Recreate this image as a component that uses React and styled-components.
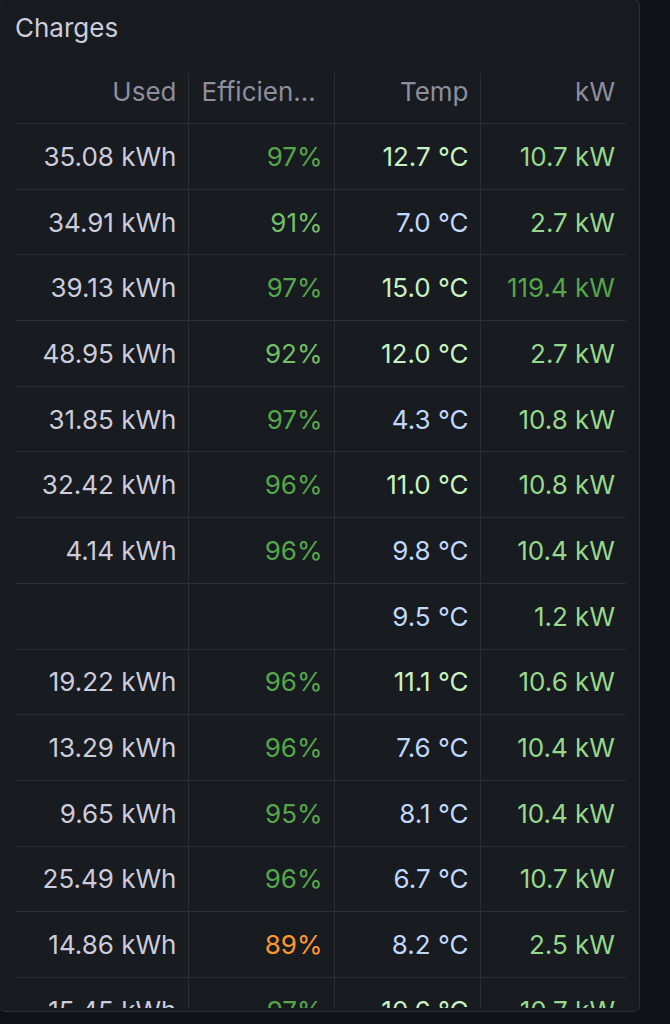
import styled, { createGlobalStyle } from 'styled-components';

const rows = [
  { used: '35.08 kWh', eff: '97%', effTone: 'dark', temp: '12.7 °C', tempTone: 'green', kw: '10.7 kW', kwTone: 'light' },
  { used: '34.91 kWh', eff: '91%', effTone: 'mid', temp: '7.0 °C', tempTone: 'blue', kw: '2.7 kW', kwTone: 'light' },
  { used: '39.13 kWh', eff: '97%', effTone: 'dark', temp: '15.0 °C', tempTone: 'green', kw: '119.4 kW', kwTone: 'dark' },
  { used: '48.95 kWh', eff: '92%', effTone: 'mid', temp: '12.0 °C', tempTone: 'green', kw: '2.7 kW', kwTone: 'light' },
  { used: '31.85 kWh', eff: '97%', effTone: 'dark', temp: '4.3 °C', tempTone: 'blue', kw: '10.8 kW', kwTone: 'light' },
  { used: '32.42 kWh', eff: '96%', effTone: 'dark', temp: '11.0 °C', tempTone: 'green', kw: '10.8 kW', kwTone: 'light' },
  { used: '4.14 kWh', eff: '96%', effTone: 'dark', temp: '9.8 °C', tempTone: 'blue', kw: '10.4 kW', kwTone: 'light' },
  { used: '', eff: '', effTone: 'dark', temp: '9.5 °C', tempTone: 'blue', kw: '1.2 kW', kwTone: 'light' },
  { used: '19.22 kWh', eff: '96%', effTone: 'dark', temp: '11.1 °C', tempTone: 'green', kw: '10.6 kW', kwTone: 'light' },
  { used: '13.29 kWh', eff: '96%', effTone: 'dark', temp: '7.6 °C', tempTone: 'blue', kw: '10.4 kW', kwTone: 'light' },
  { used: '9.65 kWh', eff: '95%', effTone: 'dark', temp: '8.1 °C', tempTone: 'blue', kw: '10.4 kW', kwTone: 'light' },
  { used: '25.49 kWh', eff: '96%', effTone: 'dark', temp: '6.7 °C', tempTone: 'blue', kw: '10.7 kW', kwTone: 'light' },
  { used: '14.86 kWh', eff: '89%', effTone: 'orange', temp: '8.2 °C', tempTone: 'blue', kw: '2.5 kW', kwTone: 'light' },
  { used: '15.45 kWh', eff: '97%', effTone: 'dark', temp: '10.6 °C', tempTone: 'green', kw: '10.7 kW', kwTone: 'light' },
];

const tones = {
  text: '#ccccdc',
  dark: '#56a64b',
  mid: '#73bf69',
  light: '#96d98d',
  green: '#c8f2c2',
  blue: '#c0d8ff',
  orange: '#ff9830',
};

export default function App() {
  return (
    <>
      <GlobalStyle />
      <Panel>
        <Title>Charges</Title>
        <TableWrap>
          <Table>
            <colgroup>
              <col style={{ width: 173 }} />
              <col style={{ width: 146 }} />
              <col style={{ width: 146 }} />
              <col style={{ width: 146 }} />
            </colgroup>
            <thead>
              <tr>
                <Th>Used</Th>
                <Th $left>Efficien...</Th>
                <Th>Temp</Th>
                <Th>kW</Th>
              </tr>
            </thead>
            <tbody>
              {rows.map((r, i) => (
                <tr key={i}>
                  <Td $tone="text">{r.used}</Td>
                  <Td $tone={r.effTone}>{r.eff}</Td>
                  <Td $tone={r.tempTone}>{r.temp}</Td>
                  <Td $tone={r.kwTone}>{r.kw}</Td>
                </tr>
              ))}
            </tbody>
          </Table>
        </TableWrap>
      </Panel>
    </>
  );
}

const GlobalStyle = createGlobalStyle`
    html, body {
        margin: 0;
        background: #111217;
        font-family: Inter, "Noto Sans", sans-serif;
    }
`;

const Panel = styled.div`
    width: 641px;
    height: 1013px;
    margin: -1px 0 0 -1px;
    background: #181b1f;
    border: 1px solid #2b2e35;
    border-radius: 6px;
    box-sizing: border-box;
    padding: 0 0 0 15px;
    overflow: hidden;
`;

const Title = styled.h2`
    margin: 0;
    height: 73px;
    padding-top: 13px;
    box-sizing: border-box;
    font-size: 26px;
    line-height: 30px;
    font-weight: 400;
    color: #ccccdc;
`;

const TableWrap = styled.div`
    width: 611px;
    height: 935px;
    overflow: hidden;
`;

const Table = styled.table`
    width: 611px;
    border-collapse: collapse;
    table-layout: fixed;
    font-size: 26px;
`;

const Th = styled.th`
    height: 36px;
    padding: 0 11px 14px 13px;
    text-align: ${(p) => (p.$left ? 'left' : 'right')};
    font-weight: 400;
    color: #8e8e9e;
    white-space: nowrap;
    overflow: hidden;
    border-left: 1px solid #2b2e35;
    border-bottom: 1px solid #2b2e35;

    &:first-child {
        border-left: none;
    }
`;

const Td = styled.td`
    height: 64.7px;
    padding: 0 11px 0 12px;
    text-align: right;
    white-space: nowrap;
    color: ${(p) => tones[p.$tone]};
    border-left: 1px solid #2b2e35;
    border-bottom: 1px solid #2b2e35;

    &:first-child {
        border-left: none;
    }
`;
